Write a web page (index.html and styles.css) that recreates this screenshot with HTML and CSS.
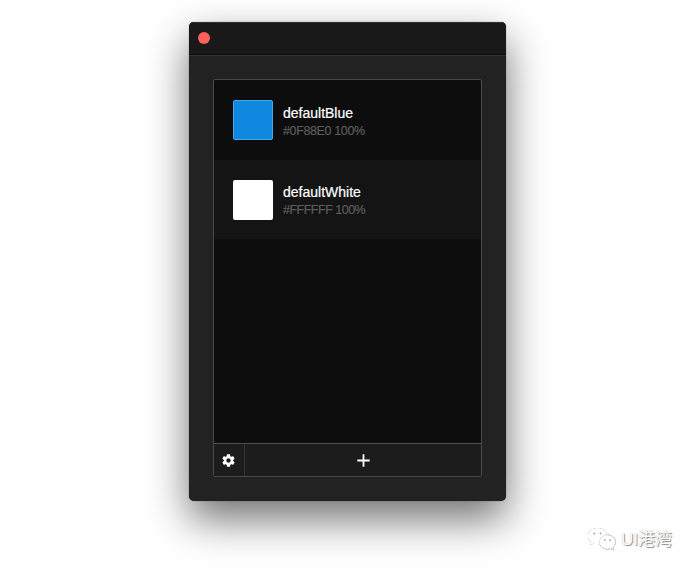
FILE: index.html
```html
<!DOCTYPE html>
<html lang="en">
<head>
<meta charset="utf-8">
<title>Colors</title>
<link rel="stylesheet" href="styles.css">
</head>
<body>
<main class="window">
  <header class="titlebar"><button class="close" aria-label="Close"></button></header>
  <section class="content">
    <div class="panel">
      <ul class="list">
        <li class="row">
          <span class="swatch swatch-blue"></span>
          <div class="info"><span class="name">defaultBlue</span><span class="value">#0F88E0 100%</span></div>
        </li>
        <li class="row row-alt">
          <span class="swatch swatch-white"></span>
          <div class="info"><span class="name">defaultWhite</span><span class="value value-white">#FFFFFF 100%</span></div>
        </li>
      </ul>
      <footer class="toolbar">
        <button class="tool settings" aria-label="Settings">
          <svg width="15" height="15" viewBox="0 0 24 24"><path fill="#fff" d="M19.43 12.98c.04-.32.07-.64.07-.98s-.03-.66-.07-.98l2.11-1.65c.19-.15.24-.42.12-.64l-2-3.46c-.12-.22-.39-.3-.61-.22l-2.49 1c-.52-.4-1.08-.73-1.69-.98l-.38-2.65C14.46 2.18 14.25 2 14 2h-4c-.25 0-.46.18-.49.42l-.38 2.65c-.61.25-1.17.59-1.69.98l-2.49-1c-.23-.09-.49 0-.61.22l-2 3.46c-.13.22-.07.49.12.64l2.11 1.65c-.04.32-.07.65-.07.98s.03.66.07.98l-2.11 1.65c-.19.15-.24.42-.12.64l2 3.46c.12.22.39.3.61.22l2.49-1c.52.4 1.08.73 1.69.98l.38 2.65c.03.24.24.42.49.42h4c.25 0 .46-.18.49-.42l.38-2.65c.61-.25 1.17-.59 1.69-.98l2.49 1c.23.09.49 0 .61-.22l2-3.46c.12-.22.07-.49-.12-.64l-2.11-1.65zM12 15.500c-1.930 0-3.500-1.570-3.500-3.500s1.570-3.500 3.500-3.500 3.500 1.570 3.500 3.500-1.570 3.500-3.500 3.500z"/></svg>
        </button>
        <button class="tool add" aria-label="Add">
          <svg width="13" height="13" viewBox="0 0 13 13"><path d="M6.500 .3V12.700M.3 6.500H12.700" stroke="#fff" stroke-width="1.800"/></svg>
        </button>
      </footer>
    </div>
  </section>
</main>
<div class="watermark">
  <svg width="30" height="25" viewBox="0 0 30 25" fill="#fff">
    <path d="M10.500 1C5 1 1 4.600 1 9c0 2.500 1.300 4.700 3.300 6.100L3.500 18l3.300-1.600c1.200.4 2.400.6 3.700.6 5.500 0 9.500-3.600 9.500-8S16 1 10.500 1z"/>
    <g fill="#a8a8a8"><circle cx="7.300" cy="6.600" r="1"/><circle cx="13.600" cy="6.600" r="1"/></g>
    <path stroke="#ccc" stroke-width=".6" d="M20.500 8c-4.600 0-8 3.100-8 7s3.400 7 8 7c1.100 0 2.200-.2 3.100-.5l2.900 1.500-.7-2.600c1.700-1.300 2.700-3.200 2.700-5.400 0-3.900-3.400-7-8-7z"/>
    <g fill="#a8a8a8"><circle cx="17.900" cy="13.200" r=".9"/><circle cx="23.100" cy="13.200" r=".9"/></g>
  </svg>
  <span class="brand">UI港湾</span>
</div>
</body>
</html>
```
FILE: styles.css
```css
* { box-sizing: border-box; }
body {
  margin: 0;
  height: 571px;
  overflow: hidden;
  background: #fff;
  padding: 22px 0 0 189px;
  font-family: "Liberation Sans", Arial, sans-serif;
}
button { border: 0; padding: 0; margin: 0; background: none; }
.window {
  width: 317px;
  height: 479px;
  display: flex;
  flex-direction: column;
  background: #222;
  border-radius: 5px;
  overflow: hidden;
  box-shadow: 0 0 1px rgba(0,0,0,.7), 0 18px 42px rgba(0,0,0,.56);
}
.titlebar {
  height: 33px;
  padding: 0 9px 1px;
  display: flex;
  align-items: center;
  background: #191919;
  border-top: 1px solid #303030;
  border-bottom: 1px solid #0d0d0d;
}
.close { width: 12px; height: 12px; border-radius: 50%; background: #fc605b; }
.content {
  flex: 1;
  display: flex;
  padding: 23px 24px 24px;
  border-top: 1px solid #343434;
}
.panel {
  flex: 1;
  display: flex;
  flex-direction: column;
  border: 1px solid #4a4a4a;
  border-radius: 2px;
  background: #0d0d0d;
  overflow: hidden;
}
.list { flex: 1; margin: 0; padding: 0; list-style: none; }
.row { height: 80px; display: flex; align-items: center; gap: 10px; padding: 0 19px; }
.row-alt { height: 79px; background: #141414; }
.swatch { width: 40px; height: 40px; border-radius: 2px; }
.swatch-blue { background: #0f88e0; border: 1px solid #4ba4e6; }
.swatch-white { background: #fff; }
.info { display: flex; flex-direction: column; padding-top: 5px; }
.row-alt .info { padding-top: 4px; }
.name { font-size: 14px; line-height: 18px; color: #fff; -webkit-text-stroke: .2px #fff; }
.value { font-size: 12.500px; line-height: 19px; letter-spacing: -.37px; color: #5c5c5c; -webkit-text-stroke: .2px #5c5c5c; }
.value-white { letter-spacing: -.5px; }
.toolbar { height: 33px; padding-top: 1px; display: flex; background: #1c1c1c; border-top: 1px solid #505050; }
.tool { display: flex; align-items: center; justify-content: center; }
.settings { width: 31px; padding-right: 1px; box-shadow: 0 -1px #1c1c1c; border-right: 1px solid #333; }
.add { flex: 1; }
.watermark {
  position: absolute;
  left: 587px;
  top: 527px;
  display: flex;
  align-items: center;
  gap: 4px;
}
.watermark svg { filter: drop-shadow(0 0 .5px #bbb) drop-shadow(.7px .7px .3px #aaa); }
.brand {
  font: 17px/25px "Liberation Sans", "Noto Sans CJK SC", sans-serif;
  color: #fff;
  text-shadow: 1px 1px 1px #888, 0 0 1px #bbb;
}
```
